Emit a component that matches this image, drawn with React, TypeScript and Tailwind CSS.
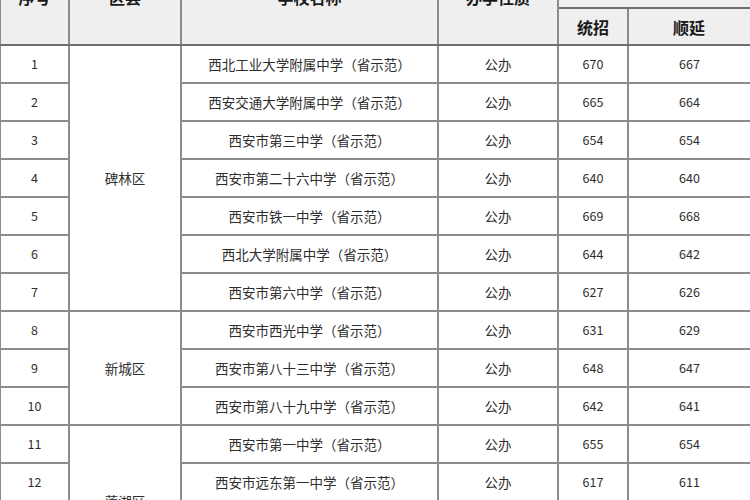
const rows = [
  { no: 1, name: '西北工业大学附属中学（省示范）', a: 670, b: 667 },
  { no: 2, name: '西安交通大学附属中学（省示范）', a: 665, b: 664 },
  { no: 3, name: '西安市第三中学（省示范）', a: 654, b: 654 },
  { no: 4, name: '西安市第二十六中学（省示范）', a: 640, b: 640 },
  { no: 5, name: '西安市铁一中学（省示范）', a: 669, b: 668 },
  { no: 6, name: '西北大学附属中学（省示范）', a: 644, b: 642 },
  { no: 7, name: '西安市第六中学（省示范）', a: 627, b: 626 },
  { no: 8, name: '西安市西光中学（省示范）', a: 631, b: 629 },
  { no: 9, name: '西安市第八十三中学（省示范）', a: 648, b: 647 },
  { no: 10, name: '西安市第八十九中学（省示范）', a: 642, b: 641 },
  { no: 11, name: '西安市第一中学（省示范）', a: 655, b: 654 },
  { no: 12, name: '西安市远东第一中学（省示范）', a: 617, b: 611 },
  { no: 13, name: '西安市第二十三中学（省示范）', a: 630, b: 628 },
  { no: 14, name: '西安市第七十中学（省示范）', a: 625, b: 623 },
];

// 区县合并单元格：起始序号 -> [名称, 跨行数]
const districts: Record<number, [string, number]> = {
  1: ['碑林区', 7],
  8: ['新城区', 3],
  11: ['莲湖区', 4],
};

const cell = 'border-2 border-[#8c8c8c] text-center align-middle p-0';
const head = 'border-2 border-[#8c8c8c] border-b-[#6e6e6e] bg-[#efefef] text-center align-middle font-bold text-[16px] text-[#1a1a1a] p-0';

export default function App() {
  return (
    <div className="w-[750px] h-[500px] overflow-hidden bg-white">
      <table
        className="mt-[-52px] ml-[-1px] border-collapse table-fixed w-[756px] text-[#2e2e2e] text-[13.5px]"
        style={{ fontFamily: '"Noto Sans CJK SC", "Noto Sans", sans-serif' }}
      >
        <colgroup>
          <col className="w-[69px]" />
          <col className="w-[112px]" />
          <col className="w-[257px]" />
          <col className="w-[120px]" />
          <col className="w-[70px]" />
          <col className="w-[128px]" />
        </colgroup>
        <thead>
          <tr className="h-[59px]">
            <th rowSpan={2} className={head}>序号</th>
            <th rowSpan={2} className={head}>区县</th>
            <th rowSpan={2} className={head}>学校名称</th>
            <th rowSpan={2} className={head}>办学性质</th>
            <th colSpan={2} className={head}>录取分数线</th>
          </tr>
          <tr className="h-[37px]">
            <th className={head}>统招</th>
            <th className={`${head} text-left pl-[44px]`}>顺延</th>
          </tr>
        </thead>
        <tbody>
          {rows.map((r) => (
            <tr key={r.no} className="h-[38px]">
              <td className={`${cell} text-[12.5px]`}>{r.no}</td>
              {districts[r.no] && (
                <td rowSpan={districts[r.no][1]} className={cell}>
                  {districts[r.no][0]}
                </td>
              )}
              <td className={cell}>{r.name}</td>
              <td className={cell}>公办</td>
              <td className={`${cell} text-[12.5px]`}>{r.a}</td>
              <td className={`${cell} text-left pl-[50px] text-[12.5px]`}>{r.b}</td>
            </tr>
          ))}
        </tbody>
      </table>
    </div>
  );
}
